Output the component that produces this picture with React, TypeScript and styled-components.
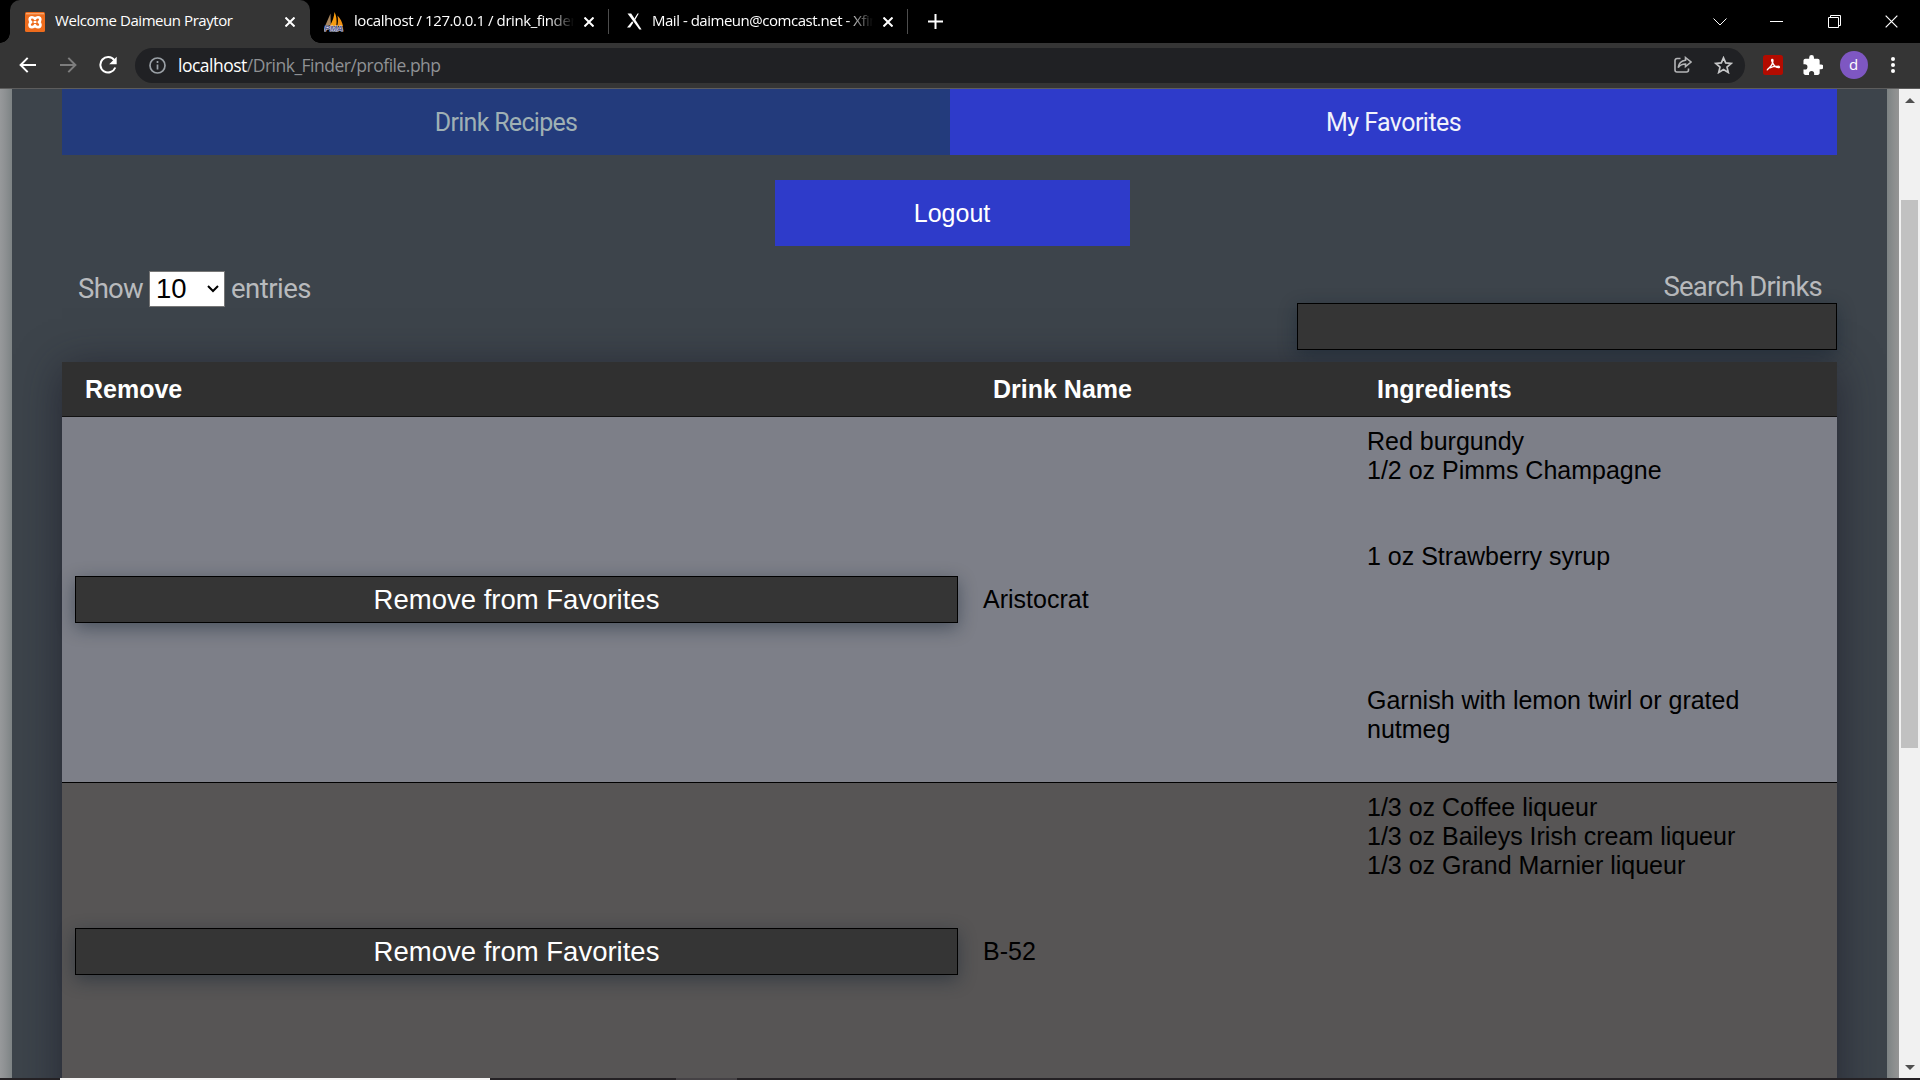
import React from 'react';
import styled, { createGlobalStyle, css } from 'styled-components';

const UI = '"Open Sans", "Noto Sans", sans-serif';
const BODY = '"Liberation Sans", Arial, sans-serif';
const HEAD = 'Roboto, "Liberation Sans", sans-serif';

const Global = createGlobalStyle`
  *, *::before, *::after { box-sizing: border-box; }
  html, body { margin: 0; background: #000; overflow: hidden; }
`;

const Screen = styled.div`
  width: 1920px;
  height: 1080px;
  display: flex;
  flex-direction: column;
  overflow: hidden;
`;

/* ---------- browser chrome ---------- */

const TabStrip = styled.header`
  flex: none;
  height: 43px;
  display: flex;
  align-items: center;
  background: #000;
  padding-left: 10px;
`;

const Tab = styled.div<{ $active?: boolean; $width: number; $inset?: number }>`
  position: relative;
  width: ${p => p.$width}px;
  height: 43px;
  display: flex;
  align-items: center;
  padding: 0 ${p => (p.$active ? 15 : 14)}px 0 ${p => p.$inset ?? 14}px;
  ${p =>
    p.$active &&
    css`
      background: #353535;
      border-radius: 10px 10px 0 0;
      &::before,
      &::after {
        content: '';
        position: absolute;
        bottom: 0;
        width: 10px;
        height: 10px;
      }
      &::before {
        left: -10px;
        background: radial-gradient(circle at 0 0, transparent 9.5px, #353535 10px);
      }
      &::after {
        right: -10px;
        background: radial-gradient(circle at 100% 0, transparent 9.5px, #353535 10px);
      }
    `}
`;

const TabTitle = styled.span<{ $fade?: boolean; $spacing?: number }>`
  flex: 1;
  min-width: 0;
  margin: -3px 10px 0 10px;
  overflow: hidden;
  white-space: nowrap;
  font: 15px/24px ${UI};
  letter-spacing: ${p => p.$spacing ?? 0}px;
  color: #fff;
  ${p =>
    p.$fade &&
    css`
      mask-image: linear-gradient(to right, #000 calc(100% - 26px), transparent);
    `}
`;

const TabDivider = styled.i`
  width: 1px;
  height: 25px;
  background: #4d4d4d;
`;

const NewTab = styled.div`
  width: 54px;
  display: flex;
  justify-content: center;
`;

const WindowButtons = styled.div`
  margin-left: auto;
  height: 37px;
  display: flex;
  align-items: center;
`;

const WindowButton = styled.div<{ $width: number }>`
  width: ${p => p.$width}px;
  display: flex;
  justify-content: center;
`;

const Toolbar = styled.div`
  flex: none;
  height: 46px;
  display: flex;
  align-items: center;
  background: #353535;
  border-bottom: 1px solid #5d5d5d;
  padding: 0 11px 1px 8px;
`;

const ToolButton = styled.div<{ $width?: number }>`
  flex: none;
  width: ${p => p.$width ?? 40}px;
  display: flex;
  justify-content: center;
`;

const AddressBar = styled.div`
  flex: none;
  margin: 0 6px 0 7px;
  width: 1610px;
  height: 35px;
  border-radius: 18px;
  background: #202124;
  display: flex;
  align-items: center;
  padding: 0 14px 0 14px;
`;

const Url = styled.span`
  flex: 1;
  margin-left: 12px;
  font: 17.5px/26px ${UI};
  letter-spacing: -0.5px;
  color: #8f9194;
  b {
    font-weight: 400;
    color: #fff;
  }
`;

const AddressIcon = styled.span`
  width: 40px;
  display: flex;
  justify-content: center;
  &:last-child { margin-right: -12px; }
`;

const Avatar = styled.div`
  width: 28px;
  height: 28px;
  border-radius: 50%;
  background: #7e57c2;
  color: #fff;
  font: 15px/27px ${UI};
  text-align: center;
`;

/* ---------- page ---------- */

const Viewport = styled.main`
  flex: 1;
  min-height: 0;
  display: flex;
`;

const Backdrop = styled.div`
  flex: 1;
  min-width: 0;
  overflow: hidden;
  padding: 0 12px;
  background: linear-gradient(to right, #97999b 0, #8e9193 5px, #7d8384 12px, #7d8384 1887px, #8e9090 1895px, #949494 1899px);
`;

const Container = styled.div`
  height: 989px;
  padding: 0 50px;
  overflow: hidden;
  background: #3d444b;
`;

const Tabs = styled.nav`
  display: flex;
  height: 66px;
`;

const PageTab = styled.a<{ $active?: boolean; $spacing: number }>`
  flex: ${p => (p.$active ? 887 : 888)};
  font: 25px/67px ${HEAD};
  height: 66px;
  letter-spacing: ${p => p.$spacing}px;
  text-align: center;
  color: ${p => (p.$active ? '#f1f3fb' : '#9fb0b4')};
  background: ${p => (p.$active ? '#2e3bca' : '#233b7c')};
`;

const Logout = styled.button`
  display: block;
  width: 355px;
  height: 66px;
  margin: 25px 0 0 713px;
  padding: 0 1px 0 0;
  border: 0;
  background: #2e3bca;
  color: #fff;
  font: 25px/66px ${BODY};
`;

const Controls = styled.div`
  display: flex;
  justify-content: space-between;
  align-items: flex-start;
  height: 116px;
`;

const Length = styled.label`
  display: flex;
  align-items: center;
  margin: 25px 0 0 16px;
  height: 35px;
  font: 27.5px/35px ${HEAD};
  color: #b8babd;
`;

const Word = styled.span<{ $width: number; $spacing: number }>`
  width: ${p => p.$width}px;
  letter-spacing: ${p => p.$spacing}px;
`;

const Select = styled.span`
  width: 76px;
  height: 36px;
  margin-right: 6px;
  padding: 0 5px 0 6px;
  display: flex;
  align-items: center;
  justify-content: space-between;
  border: 1px solid #767676;
  background: #fff;
  color: #000;
  font: 27.5px/32px ${BODY};
`;

const Filter = styled.label`
  display: flex;
  flex-direction: column;
  width: 540px;
  margin-top: 22px;
  font: 27.5px/35px ${HEAD};
  letter-spacing: -0.78px;
  text-align: right;
  color: #b8babd;
  span {
    height: 35px;
    padding: 1px 15px 0 0;
  }
`;

const raised = css`
  border: 1px solid #000;
  background: #353535;
  box-shadow: 0 5px 18px rgba(15, 30, 45, 0.46);
`;

const SearchBox = styled.input`
  ${raised}
  width: 540px;
  height: 47px;
  padding: 0 12px;
  outline: 0;
`;

const Table = styled.section`
  box-shadow: 0 6px 40px rgba(24, 24, 38, 0.66);
`;

const columns = css`
  display: grid;
  grid-template-columns: 908px 384px 483px;
`;

const HeadRow = styled.div`
  ${columns}
  position: relative;
  height: 55px;
  background: #303030;
  border-bottom: 1px solid #111;
  color: #fff;
  font: bold 25px/54px ${BODY};
  span { padding-left: 23px; }
`;

const Row = styled.div<{ $even?: boolean }>`
  ${columns}
  align-items: center;
  height: ${p => (p.$even ? 338 : 366)}px;
  background: ${p => (p.$even ? '#575555' : '#7d7f88')};
  border-bottom: 1px solid #000;
  color: #000;
  font: 25px/28.75px ${BODY};
`;

const Cell = styled.div`
  padding: 0 12px 0 13px;
`;

const Ingredients = styled(Cell)`
  align-self: start;
  padding-top: 10.4px;
  white-space: pre-line;
`;

const RemoveButton = styled.button`
  ${raised}
  display: block;
  width: 100%;
  height: 47px;
  padding: 0;
  color: #fff;
  font: 27.5px/44px ${BODY};
`;

const Scrollbar = styled.aside`
  flex: none;
  width: 21px;
  background: #f1f1f1;
  display: flex;
  flex-direction: column;
  align-items: center;
  justify-content: space-between;
  padding: 9px 0 8px;
`;

const Thumb = styled.i`
  width: 17px;
  height: 548px;
  margin: 97px 0 auto;
  background: #c1c1c1;
`;

const Arrow = styled.i<{ $down?: boolean }>`
  border: 5px solid transparent;
  border-top-width: ${p => (p.$down ? 5 : 0)}px;
  border-bottom-width: ${p => (p.$down ? 0 : 5)}px;
  border-${p => (p.$down ? 'top' : 'bottom')}-color: #505050;
`;

const Taskbar = styled.footer`
  flex: none;
  height: 2px;
  display: flex;
  background: #242124;
`;

const TaskbarItem = styled.i<{ $start: number; $width: number; $color: string }>`
  margin-left: ${p => p.$start}px;
  width: ${p => p.$width}px;
  background: ${p => p.$color};
`;

/* ---------- icons ---------- */

const Svg = styled.svg<{ $color?: string; $stroke?: number }>`
  flex: none;
  fill: none;
  stroke: ${p => p.$color ?? '#fff'};
  stroke-width: ${p => p.$stroke ?? 2};
`;

const Close = ({ size = 10, stroke = 2 }) => (
  <Svg width={size} height={size} viewBox="0 0 10 10" $stroke={(stroke * 10) / size}>
    <path d="M.5.5l9 9M9.5.5l-9 9" />
  </Svg>
);

const XamppIcon = () => (
  <svg width="20" height="20" viewBox="0 0 20 20" fill="none">
    <rect width="20" height="20" rx="1.5" fill="#ee6c1d" />
    <path d="M1 1.7h18" stroke="#f6a56d" strokeWidth="1.4" />
    <path d="M10 7C9 4.600 4.700 4.500 4.700 7.400c0 1.300.6 2 1.500 2.600-.9.7-1.700 1.400-1.700 2.700 0 3.100 4.300 3.200 5.500.5 1.200 2.700 5.500 2.600 5.500-.5 0-1.300-.8-2-1.700-2.700.9-.6 1.500-1.300 1.500-2.600C15.300 4.500 11 4.600 10 7z" stroke="#fff" strokeWidth="2.600" strokeLinejoin="round" />
    <path d="M8.600 10h2.800" stroke="#fff" strokeWidth="2" />
  </svg>
);

const PmaIcon = () => (
  <svg width="20" height="20" viewBox="0 0 20 20">
    <path d="M6.500 1.500L1.500 13h5.300z" fill="#a9875f" />
    <path d="M10.500 0c2 3.500 2.500 8.500 1.800 14H5.800C8.600 9.500 10 5 10.500 0z" fill="#f89c0e" />
    <path d="M13.500 3.500c3 3 4.800 7 5.500 10.500h-5.800c.9-3 1-6.500.3-10.500z" fill="#f29111" />
    <text x=".3" y="19.300" textLength="19" lengthAdjust="spacingAndGlyphs" fontFamily="Liberation Sans" fontWeight="700" fontStyle="italic" fontSize="8" fill="#5b5f92" stroke="#d5d6e6" strokeWidth="1.200" paintOrder="stroke">PMA</text>
  </svg>
);

const XfinityIcon = () => (
  <svg width="15" height="17" viewBox="0 0 15 17" fill="#fff">
    <path d="M.5.500h3.700L14.600 16.500h-2.200z" />
    <path d="M10.500.500h1.300L7.700 7.700 6.800 6.400zM5.200 8.200l1.100 1.500L3.100 14.500H0z" />
  </svg>
);

/* ---------- data ---------- */

const drinks = [
  {
    name: 'Aristocrat',
    ingredients:
      'Red burgundy\n1/2 oz Pimms Champagne\n\n\n1 oz Strawberry syrup\n\n\n\n\nGarnish with lemon twirl or grated nutmeg',
  },
  {
    name: 'B-52',
    ingredients: '1/3 oz Coffee liqueur\n1/3 oz Baileys Irish cream liqueur\n1/3 oz Grand Marnier liqueur',
  },
];

export default function App() {
  return (
    <Screen>
      <Global />
      <TabStrip>
        <Tab $active $width={300} $inset={15}>
          <XamppIcon />
          <TabTitle $spacing={-0.44}>Welcome Daimeun Praytor</TabTitle>
          <Close />
        </Tab>
        <Tab $width={298}>
          <PmaIcon />
          <TabTitle $fade $spacing={-0.42}>localhost / 127.0.0.1 / drink_finder</TabTitle>
          <Close />
        </Tab>
        <TabDivider />
        <Tab $width={298} $inset={18}>
          <XfinityIcon />
          <TabTitle $fade $spacing={-0.48}>Mail - daimeun@comcast.net - Xfinity</TabTitle>
          <Close />
        </Tab>
        <TabDivider />
        <NewTab>
          <Svg width="15" height="15" viewBox="0 0 15 15"><path d="M7.500 0v15M0 7.500h15" /></Svg>
        </NewTab>
        <WindowButtons>
          <WindowButton $width={57}>
            <Svg width="14" height="8" viewBox="0 0 14 8" $stroke={1}><path d="M.5.500L7 7 13.500.500" /></Svg>
          </WindowButton>
          <WindowButton $width={57}>
            <Svg width="13" height="1" viewBox="0 0 13 1"><path d="M0 .5h13" /></Svg>
          </WindowButton>
          <WindowButton $width={58}>
            <Svg width="13" height="13" viewBox="0 0 13 13" $stroke={1}><path d="M.5 2.500h10v10H.5zM2.500 2.500v-2h10v10h-2" /></Svg>
          </WindowButton>
          <WindowButton $width={57}><Close size={13} stroke={1.2} /></WindowButton>
        </WindowButtons>
      </TabStrip>

      <Toolbar>
        <ToolButton>
          <Svg width="18" height="16" viewBox="0 0 18 16"><path d="M17 8H2M8.700.900L1.600 8l7.100 7.100" /></Svg>
        </ToolButton>
        <ToolButton>
          <Svg width="18" height="16" viewBox="0 0 18 16" $color="#7d7d7d"><path d="M1 8h15M9.300.900L16.400 8l-7.100 7.100" /></Svg>
        </ToolButton>
        <ToolButton>
          <Svg width="18" height="18" viewBox="0 0 18 18">
            <path d="M15.300 4.200A7.700 7.700 0 1 0 16.300 11.500" />
            <path d="M17.700.800v7.500h-7.500z" fill="#fff" stroke="none" />
          </Svg>
        </ToolButton>
        <AddressBar>
          <Svg width="17" height="17" viewBox="0 0 17 17" $color="#9aa0a6" $stroke={1.7}>
            <circle cx="8.500" cy="8.500" r="7.500" /><path d="M8.500 7.500v5M8.500 4v2" />
          </Svg>
          <Url><b>localhost</b>/Drink_Finder/profile.php</Url>
          <AddressIcon>
            <Svg width="18" height="18" viewBox="0 0 18 18" $color="#b4b5b7" $stroke={1.6}>
              <path d="M6.500 2.500H3A2 2 0 0 0 1 4.500V14a2 2 0 0 0 2 2h9.500a2 2 0 0 0 2-2v-1.500" />
              <path d="M11.500 1.500L17 6l-5.500 4.500V8C8 8 6 9 4.200 11.500 4.700 7.500 7.500 4.700 11.500 4.200z" />
            </Svg>
          </AddressIcon>
          <AddressIcon>
            <Svg width="19" height="18" viewBox="0 0 19 18" $color="#c6c7c8" $stroke={1.7}>
              <path d="M9.500 1.800l2.200 5.100 5.500.5-4.200 3.700 1.300 5.400-4.800-2.900-4.800 2.900L6 11.100 1.800 7.400l5.500-.5z" />
            </Svg>
          </AddressIcon>
        </AddressBar>
        <ToolButton $width={43}>
          <Svg width="20" height="20" viewBox="0 0 20 20" $stroke={1.4}>
            <rect width="20" height="20" rx="2.500" fill="#b30b00" stroke="none" />
            <path d="M4.600 15.300C3.200 14 10.300 11.700 9.900 5.300c-.1-1.500-1.700-1-1 .9 1 3 3.400 6 6.500 6.400 1.600.1 1.200-1.600-.6-1.500-4 .1-6 .7-8 1.900" />
          </Svg>
        </ToolButton>
        <ToolButton $width={38}>
          <Svg width="20" height="20" viewBox="1.500 1 21 21">
            <path fill="#fff" stroke="none" d="M20.500 11H19V7c0-1.100-.9-2-2-2h-4V3.500a2.500 2.500 0 0 0-5 0V5H4c-1.100 0-2 .9-2 2v3.800h1.500a2.700 2.700 0 0 1 0 5.400H2V20c0 1.100.9 2 2 2h3.800v-1.500a2.700 2.700 0 0 1 5.400 0V22H17c1.100 0 2-.9 2-2v-4h1.500a2.500 2.500 0 0 0 0-5z" />
          </Svg>
        </ToolButton>
        <ToolButton $width={43}><Avatar>d</Avatar></ToolButton>
        <ToolButton $width={36}>
          <Svg width="4" height="16" viewBox="0 0 4 16" $color="none">
            <g fill="#fff"><circle cx="2" cy="2" r="2" /><circle cx="2" cy="8" r="2" /><circle cx="2" cy="14" r="2" /></g>
          </Svg>
        </ToolButton>
      </Toolbar>

      <Viewport>
        <Backdrop>
          <Container>
            <Tabs>
              <PageTab $spacing={-0.7}>Drink Recipes</PageTab>
              <PageTab $active $spacing={-0.55}>My Favorites</PageTab>
            </Tabs>
            <Logout>Logout</Logout>
            <Controls>
              <Length>
                <Word $width={71} $spacing={-0.7}>Show</Word>
                <Select>
                  10
                  <Svg width="12" height="8" viewBox="0 0 12 8" $color="#000"><path d="M1 1l5 5 5-5" /></Svg>
                </Select>
                <Word $width={90} $spacing={-0.5}>entries</Word>
              </Length>
              <Filter>
                <span>Search Drinks</span>
                <SearchBox aria-label="Search Drinks" />
              </Filter>
            </Controls>
            <Table>
              <HeadRow>
                <span>Remove</span>
                <span>Drink Name</span>
                <span>Ingredients</span>
              </HeadRow>
              {drinks.map((drink, i) => (
                <Row key={drink.name} $even={i % 2 === 1}>
                  <Cell><RemoveButton>Remove from Favorites</RemoveButton></Cell>
                  <Cell>{drink.name}</Cell>
                  <Ingredients>{drink.ingredients}</Ingredients>
                </Row>
              ))}
            </Table>
          </Container>
        </Backdrop>
        <Scrollbar>
          <Arrow />
          <Thumb />
          <Arrow $down />
        </Scrollbar>
      </Viewport>

      <Taskbar>
        <TaskbarItem $start={60} $width={430} $color="#f5f5f5" />
        <TaskbarItem $start={186} $width={61} $color="#454245" />
      </Taskbar>
    </Screen>
  );
}
